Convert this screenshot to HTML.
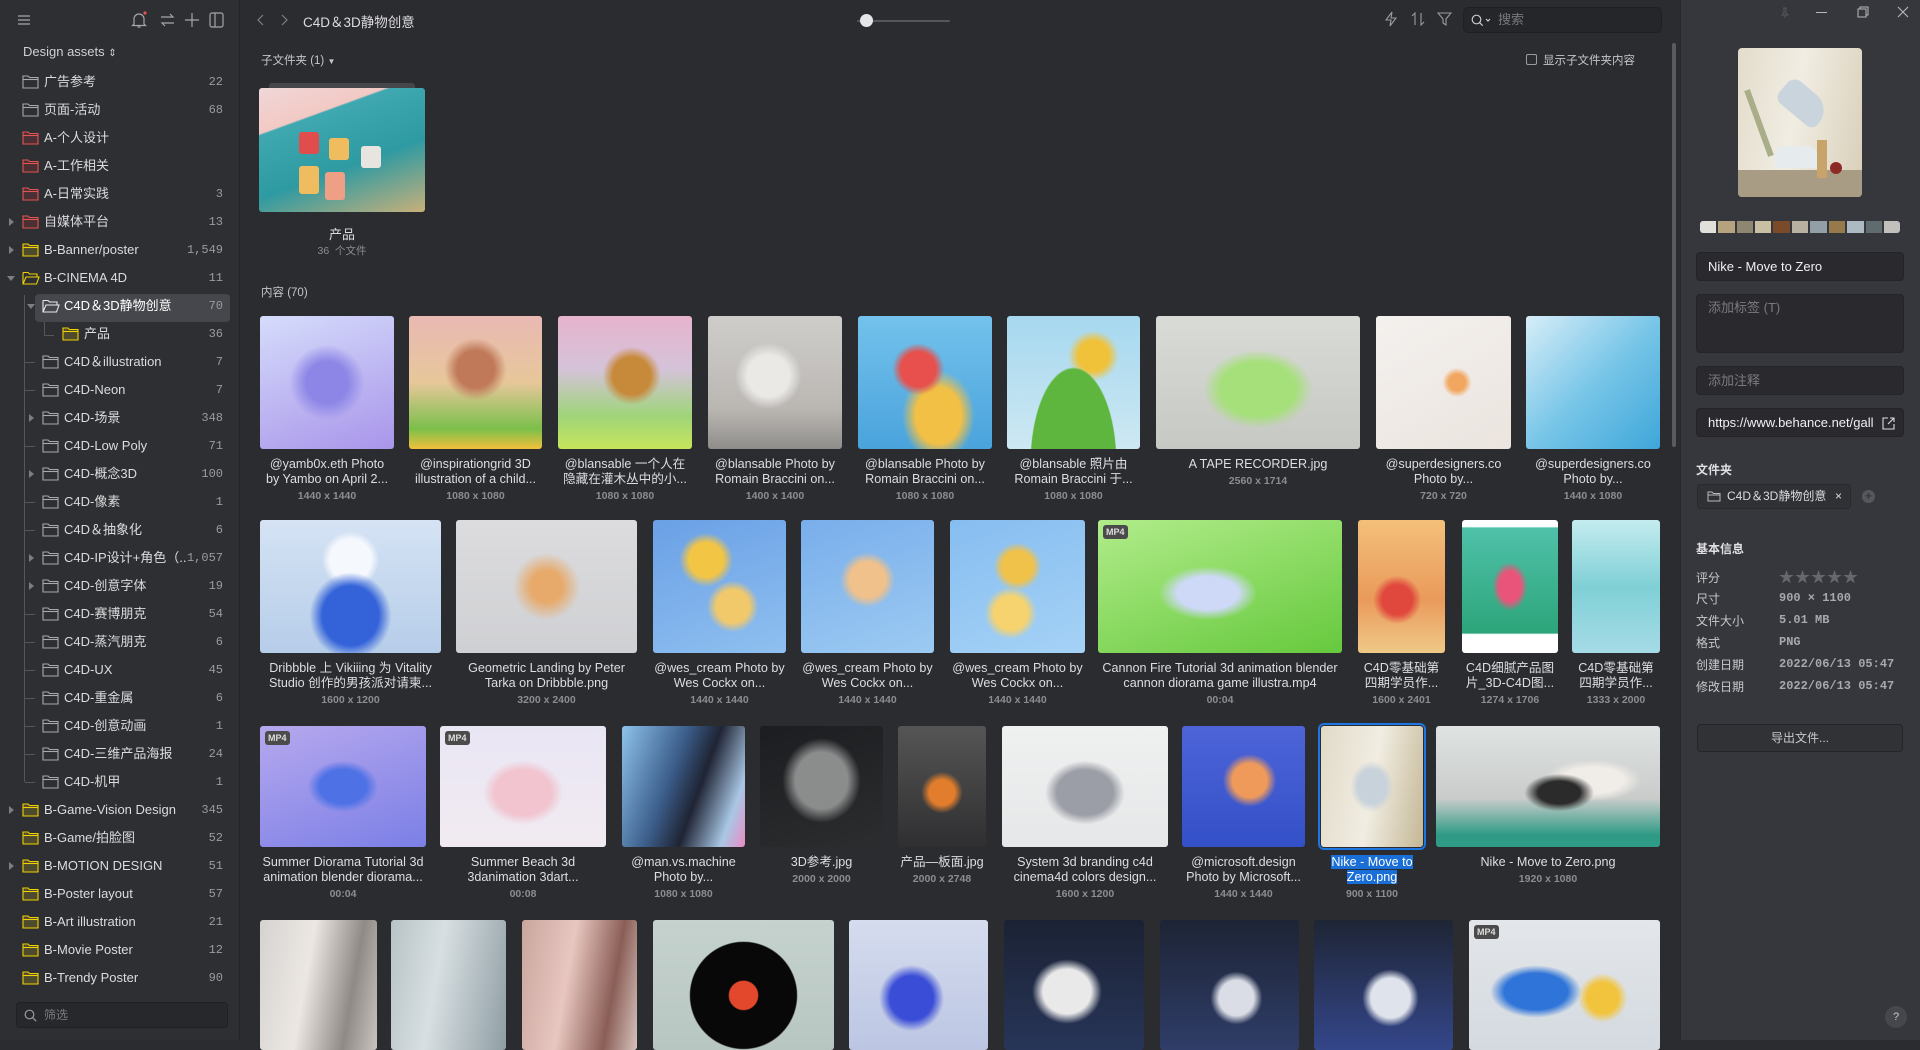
<!DOCTYPE html>
<html><head><meta charset="utf-8"><style>
*{box-sizing:border-box;margin:0;padding:0}
body{width:1920px;height:1040px;overflow:hidden;background:#2b2c30;font-family:"Liberation Sans","Noto Sans CJK SC",sans-serif;color:#d8d8da;position:relative}
.abs{position:absolute}
#side{left:0;top:0;width:240px;height:1040px;background:#2e2f33;border-right:1px solid #232427}
#right{left:1680px;top:0;width:240px;height:1040px;background:#36373c;border-left:1px solid #27282b}
.row{position:absolute;left:0;width:240px;height:28px;font-size:13px;line-height:28px;color:#dcdcde}
.row .n{position:absolute;right:17px;top:0;font-family:"Liberation Mono","DejaVu Sans Mono",monospace;font-size:12px;color:#9a9ba0}
.row svg{display:block}
.row .t{position:absolute;top:0;white-space:nowrap}
.row .ar{position:absolute;top:10px;width:0;height:0;border-top:4px solid transparent;border-bottom:4px solid transparent;border-left:5px solid #7d7e83}
.row .ad{position:absolute;top:12px;width:0;height:0;border-left:4px solid transparent;border-right:4px solid transparent;border-top:5px solid #7d7e83}
.it{position:absolute;text-align:center}
.th{border-radius:3px;position:relative;overflow:hidden}
.cap{font-size:12.6px;line-height:15px;color:#dedee0;margin-top:8px;white-space:nowrap;overflow:hidden;margin-left:-8px;margin-right:-8px}
.sz{font-size:10.5px;line-height:16px;color:#8c8d92;font-weight:bold;margin-top:1px}
.mp4{position:absolute;left:5px;top:5px;background:#4a4b4a;color:#ddd;font-size:9px;font-weight:bold;padding:2px 3px;border-radius:3px}
.inp{position:absolute;left:1696px;width:208px;background:#2a2a2e;border:1px solid #242428;border-radius:4px;font-size:13px;padding-left:11px}
.lab{position:absolute;left:1696px;font-size:12px;color:#c9c9cc}
.val{position:absolute;left:1779px;font-family:"Liberation Mono","DejaVu Sans Mono",monospace;font-size:12px;color:#a8a9ad;font-weight:bold}
</style></head><body>

<div id="side" class="abs">
 <svg class="abs" style="left:17px;top:14px" width="14" height="12" viewBox="0 0 14 12"><path d="M1 2h12M1 6h12M1 10h12" stroke="#a5a6aa" stroke-width="1.2"/></svg>
 <svg class="abs" style="left:131px;top:11px" width="16" height="18" viewBox="0 0 16 18"><path d="M3 13V8a5 5 0 0 1 10 0v5l1.5 1.5h-13zM6.5 16h3" stroke="#a5a6aa" stroke-width="1.2" fill="none"/><circle cx="14" cy="2" r="1.6" fill="#e0534f"/></svg>
 <svg class="abs" style="left:160px;top:13px" width="15" height="14" viewBox="0 0 15 14"><path d="M1 4h12l-3-3M14 10H2l3 3" stroke="#a5a6aa" stroke-width="1.2" fill="none"/></svg>
 <svg class="abs" style="left:185px;top:13px" width="14" height="14" viewBox="0 0 14 14"><path d="M7 0v14M0 7h14" stroke="#a5a6aa" stroke-width="1.2"/></svg>
 <svg class="abs" style="left:209px;top:12px" width="15" height="16" viewBox="0 0 15 16"><rect x="1" y="1" width="13" height="14" rx="2" stroke="#a5a6aa" stroke-width="1.2" fill="none"/><path d="M6 1v14" stroke="#a5a6aa" stroke-width="1.2"/></svg>
 <div class="abs" style="left:23px;top:44px;font-size:13px;color:#d0d0d3">Design assets <span style="font-size:10px">⇕</span></div>
 <div class="abs" style="left:35px;top:294px;width:195px;height:28px;background:#46474c;border-radius:4px"></div>
 <div class="abs" style="left:24px;top:295px;width:1px;height:487px;background:#55565a"></div>
 <div class="abs" style="left:44px;top:322px;width:1px;height:14px;background:#55565a"></div>
 <div class="abs" style="left:44px;top:335px;width:10px;height:1px;background:#55565a"></div>
 <div id="rows"></div>
 <div class="abs" style="left:16px;top:1002px;width:212px;height:26px;background:#27282b;border:1px solid #202124;border-radius:4px;font-size:12px;color:#7a7b80;line-height:24px;padding-left:27px">筛选
  <svg class="abs" style="left:7px;top:6px" width="13" height="13" viewBox="0 0 13 13"><circle cx="5.5" cy="5.5" r="4.3" stroke="#9a9ba0" stroke-width="1.2" fill="none"/><path d="M8.7 8.7l3.5 3.5" stroke="#9a9ba0" stroke-width="1.2"/></svg></div>
</div>

<svg class="abs" style="left:256px;top:14px" width="8" height="12" viewBox="0 0 8 12"><path d="M7 1L2 6l5 5" stroke="#7d7e83" stroke-width="1.2" fill="none"/></svg>
<svg class="abs" style="left:281px;top:14px" width="8" height="12" viewBox="0 0 8 12"><path d="M1 1l5 5-5 5" stroke="#7d7e83" stroke-width="1.2" fill="none"/></svg>
<div class="abs" style="left:303px;top:11px;font-size:13.5px;color:#dcdcde">C4D＆3D静物创意</div>
<div class="abs" style="left:857px;top:20px;width:93px;height:2px;background:#55565b;border-radius:1px"></div>
<div class="abs" style="left:860px;top:14px;width:13px;height:13px;border-radius:50%;background:#e6e6e8"></div>
<svg class="abs" style="left:1384px;top:11px" width="14" height="16" viewBox="0 0 14 16"><path d="M8 1L2 9h5l-1 6 6-8H7z" stroke="#9a9ba0" stroke-width="1.1" fill="none"/></svg>
<svg class="abs" style="left:1411px;top:12px" width="15" height="14" viewBox="0 0 15 14"><path d="M4 13V1L1 4M10 1v12l3-3" stroke="#9a9ba0" stroke-width="1.1" fill="none"/></svg>
<svg class="abs" style="left:1437px;top:12px" width="15" height="14" viewBox="0 0 15 14"><path d="M1 1h13L9 7v6L6 11V7z" stroke="#9a9ba0" stroke-width="1.1" fill="none"/></svg>
<div class="abs" style="left:1463px;top:7px;width:199px;height:26px;background:#252629;border:1px solid #1f2023;border-radius:5px;font-size:13px;color:#77787d;line-height:24px;padding-left:34px">搜索
 <svg class="abs" style="left:7px;top:6px" width="24" height="13" viewBox="0 0 24 13"><circle cx="5.5" cy="5.5" r="4.3" stroke="#c9c9cc" stroke-width="1.2" fill="none"/><path d="M8.7 8.7l3 3M15 5l2 2 2-2" stroke="#c9c9cc" stroke-width="1.2" fill="none"/></svg></div>
<div class="abs" style="left:1526px;top:54px;width:11px;height:11px;border:1px solid #9a9ba0;border-radius:2px"></div>
<div class="abs" style="left:1543px;top:52px;font-size:11.5px;color:#c6c6c9">显示子文件夹内容</div>
<div class="abs" style="left:1672px;top:43px;width:4px;height:404px;background:#5a5b60;border-radius:2px"></div>

<div class="abs" style="left:261px;top:52px;font-size:11.5px;color:#c6c6c9">子文件夹 (1) <span style="font-size:8px">▼</span></div>
<div class="abs" style="left:269px;top:83px;width:146px;height:8px;background:#45464a;border-radius:3px"></div>
<div class="abs" style="left:259px;top:88px;width:166px;height:124px;border-radius:3px;background:linear-gradient(160deg,#f0d7d8 0%,#f2c9c4 25%,#3fa8b0 26%,#2e9aa2 60%,#c8b07a 100%);overflow:hidden">
 <div class="abs" style="left:40px;top:44px;width:20px;height:22px;background:#e14c4c;border-radius:3px"></div>
 <div class="abs" style="left:70px;top:50px;width:20px;height:22px;background:#efbd5f;border-radius:3px"></div>
 <div class="abs" style="left:102px;top:58px;width:20px;height:22px;background:#e8e4e0;border-radius:3px"></div>
 <div class="abs" style="left:40px;top:78px;width:20px;height:28px;background:#efbd5f;border-radius:3px"></div>
 <div class="abs" style="left:66px;top:84px;width:20px;height:28px;background:#ee9f86;border-radius:3px"></div>
</div>
<div class="abs" style="left:259px;top:224px;width:166px;text-align:center;font-size:13px;color:#dcdcde">产品</div>
<div class="abs" style="left:259px;top:243px;width:166px;text-align:center;font-size:10.5px;color:#8c8d92">36 &nbsp;个文件</div>
<div class="abs" style="left:261px;top:284px;font-size:11.5px;color:#c6c6c9">内容 (70)</div>

<div id="grid"></div>

<div id="right" class="abs"></div>
<svg class="abs" style="left:1781px;top:7px" width="8" height="12" viewBox="0 0 8 12"><path d="M2 1h4M3 1v5l-2 2h6L5 6V1M4 8v3" stroke="#55565b" stroke-width="1" fill="none"/></svg>
<div class="abs" style="left:1816px;top:12px;width:11px;height:1px;background:#b8b9bc"></div>
<svg class="abs" style="left:1857px;top:6px" width="12" height="12" viewBox="0 0 12 12"><rect x="1" y="3" width="8" height="8" stroke="#b8b9bc" fill="none"/><path d="M3 3V1h8v8H9" stroke="#b8b9bc" fill="none"/></svg>
<svg class="abs" style="left:1897px;top:6px" width="12" height="12" viewBox="0 0 12 12"><path d="M1 1l10 10M11 1L1 11" stroke="#b8b9bc" stroke-width="1.1"/></svg>
<div class="abs" style="left:1738px;top:48px;width:124px;height:149px;border-radius:4px;overflow:hidden;background:linear-gradient(100deg,#e3dccb 0%,#f1ede3 45%,#d8cfb9 100%)">
 <div class="abs" style="left:0;top:122px;width:124px;height:27px;background:#a89c84"></div>
 <div class="abs" style="left:40px;top:40px;width:50px;height:30px;background:#c9d4dc;border-radius:10px 20px 8px 8px;transform:rotate(40deg)"></div>
 <div class="abs" style="left:36px;top:98px;width:46px;height:22px;background:#e6ebee;border-radius:10px 14px 6px 6px"></div>
 <div class="abs" style="left:79px;top:92px;width:10px;height:38px;background:#c9a46a"></div>
 <div class="abs" style="left:92px;top:114px;width:12px;height:12px;border-radius:50%;background:#8c2a25"></div>
 <div class="abs" style="left:18px;top:40px;width:6px;height:70px;background:#a9ae88;transform:rotate(-20deg)"></div>
</div>
<div class="abs" style="left:1700px;top:221px;height:12px;display:flex;gap:2px">
 <div style="width:16px;background:#e0dfda;border-radius:3px 0 0 3px"></div><div style="width:17px;background:#b5a37f"></div><div style="width:16px;background:#8f8671"></div><div style="width:16px;background:#c9c0a4"></div><div style="width:17px;background:#7a4b2a"></div><div style="width:16px;background:#b8b0a0"></div><div style="width:17px;background:#939fa6"></div><div style="width:16px;background:#977a4b"></div><div style="width:17px;background:#acbac2"></div><div style="width:16px;background:#5f6b6c"></div><div style="width:16px;background:#c1c0bd;border-radius:0 3px 3px 0"></div>
</div>
<div class="inp" style="top:252px;height:29px;line-height:27px;color:#f0f0f2">Nike - Move to Zero</div>
<div class="inp" style="top:294px;height:59px;line-height:26px;color:#7a7b80">添加标签 (T)</div>
<div class="inp" style="top:366px;height:29px;line-height:27px;color:#7a7b80">添加注释</div>
<div class="inp" style="top:408px;height:29px;line-height:27px;color:#f0f0f2">https://www.behance.net/gall
 <svg class="abs" style="left:185px;top:8px" width="13" height="13" viewBox="0 0 13 13"><path d="M6 1H1v11h11V7M8 1h4v4M12 1L6 7" stroke="#ddd" stroke-width="1.1" fill="none"/></svg></div>
<div class="abs" style="left:1696px;top:461px;font-size:12px;font-weight:bold;color:#e0e0e2">文件夹</div>
<div class="abs" style="left:1697px;top:484px;width:154px;height:25px;border:1px solid #28292c;background:#303135;border-radius:4px;font-size:12px;line-height:23px;color:#dcdcde;padding-left:29px">C4D＆3D静物创意 <span style="position:absolute;left:137px;color:#ddd">×</span>
 <svg class="abs" style="left:9px;top:6px" width="14" height="11" viewBox="0 0 14 11"><path d="M1 1h4l1.5 1.5H13V10H1zM1 4h12" stroke="#b8b9bc" stroke-width="1" fill="none"/></svg></div>
<div class="abs" style="left:1862px;top:490px;width:13px;height:13px;border-radius:50%;background:#56575c;color:#36373c;font-size:12px;line-height:13px;text-align:center;font-weight:bold">+</div>
<div class="abs" style="left:1696px;top:540px;font-size:12px;font-weight:bold;color:#e0e0e2">基本信息</div>
<div class="lab" style="top:569px">评分</div><div class="abs" style="left:1779px;top:566px;font-size:15px;color:#67686d;letter-spacing:1px">★★★★★</div>
<div class="lab" style="top:590px">尺寸</div><div class="val" style="top:591px">900 × 1100</div>
<div class="lab" style="top:612px">文件大小</div><div class="val" style="top:613px">5.01 MB</div>
<div class="lab" style="top:634px">格式</div><div class="val" style="top:635px">PNG</div>
<div class="lab" style="top:656px">创建日期</div><div class="val" style="top:657px">2022/06/13 05:47</div>
<div class="lab" style="top:678px">修改日期</div><div class="val" style="top:679px">2022/06/13 05:47</div>
<div class="abs" style="left:1697px;top:724px;width:206px;height:28px;border:1px solid #242528;background:#313236;border-radius:4px;font-size:12px;line-height:26px;text-align:center;color:#c9c9cc">导出文件...</div>
<div class="abs" style="left:1885px;top:1006px;width:22px;height:22px;border-radius:50%;background:#46474c;font-size:11px;line-height:22px;text-align:center;color:#ccc">?</div>

<script>
function folder(c,open){
 if(open) return '<svg width="18" height="14" viewBox="0 0 18 14"><path d="M1 1.5h5l1.5 1.5H15V6M1 1.5V13h13.5L17 6H4L1 13" stroke="'+c+'" stroke-width="1.1" fill="none"/></svg>';
 var f=c=="#f1d100"?'fill="#4d4a2e"':(c=="#e25555"?'fill="#4a3033"':'fill="none"');
 return '<svg width="17" height="14" viewBox="0 0 17 14"><path d="M1 1h5l1.5 1.5H16V13H1z" stroke="'+c+'" stroke-width="1.1" '+f+'/><path d="M1 4.5h15" stroke="'+c+'" stroke-width="1.1"/></svg>';
}
var G="#a9aaae",R="#e25555",Y="#f1d100",W="#e8e8ea";
var rows=[
[0,"广告参考","22",G],[0,"页面-活动","68",G],[0,"A-个人设计","",R],[0,"A-工作相关","",R],[0,"A-日常实践","3",R],
[0,"自媒体平台","13",R,"r"],[0,"B-Banner/poster","1,549",Y,"r"],[0,"B-CINEMA 4D","11",Y,"d",1],
[1,"C4D＆3D静物创意","70",W,"d",1],[2,"产品","36",Y],
[1,"C4D＆illustration","7",G],[1,"C4D-Neon","7",G],[1,"C4D-场景","348",G,"r"],[1,"C4D-Low Poly","71",G],
[1,"C4D-概念3D","100",G,"r"],[1,"C4D-像素","1",G],[1,"C4D＆抽象化","6",G],[1,"C4D-IP设计+角色（..","1,057",G,"r"],
[1,"C4D-创意字体","19",G,"r"],[1,"C4D-赛博朋克","54",G],[1,"C4D-蒸汽朋克","6",G],[1,"C4D-UX","45",G],
[1,"C4D-重金属","6",G],[1,"C4D-创意动画","1",G],[1,"C4D-三维产品海报","24",G],[1,"C4D-机甲","1",G],
[0,"B-Game-Vision Design","345",Y,"r"],[0,"B-Game/拍脸图","52",Y],[0,"B-MOTION DESIGN","51",Y,"r"],
[0,"B-Poster layout","57",Y],[0,"B-Art illustration","21",Y],[0,"B-Movie Poster","12",Y],[0,"B-Trendy Poster","90",Y]];
var h="";
rows.forEach(function(r,i){
 var top=68+i*28, ix=22+r[0]*20, tx=44+r[0]*20;
 var s='<div class="row" style="top:'+top+'px">';
 if(r[0]==1&&!r[4]) s+='<div class="abs" style="left:25px;top:14px;width:10px;height:1px;background:#55565a"></div>';
 if(r[4]=="r") s+='<div class="ar" style="left:'+(ix-13)+'px"></div>';
 if(r[4]=="d") s+='<div class="ad" style="left:'+(ix-15)+'px"></div>';
 s+='<div style="position:absolute;left:'+ix+'px;top:7px">'+folder(r[3],r[5])+'</div>';
 s+='<div class="t" style="left:'+tx+'px;'+(r[3]==W?'color:#fff':'')+'">'+r[1]+'</div><div class="n">'+r[2]+'</div></div>';
 h+=s;
});
document.getElementById("rows").innerHTML=h;

function row(top,hh,items){
 var s="";
 items.forEach(function(it){
  var l=it[0],w=it[1]-it[0];
  var sel=it[6];
  s+='<div class="it" style="left:'+l+'px;top:'+top+'px;width:'+w+'px">';
  s+='<div class="th" style="height:'+hh+'px;background:'+it[2]+';'+(sel?'outline:2px solid #1d76e2;outline-offset:1px;':'')+'">'+(it[5]?'<div class="mp4">MP4</div>':'')+'</div>';
  if(it[3]!==null){
   s+='<div class="cap">'+(sel?'<span style="background:#1a6ed8;color:#fff">'+it[3].replace("<br>",'</span><br><span style="background:#1a6ed8;color:#fff">')+'</span>':it[3])+'</div><div class="sz">'+it[4]+'</div>';
  }
  s+='</div>';
 });
 return s;
}
var g="";
g+=row(316,133,[
[260,394,"radial-gradient(circle at 50% 50%,#8d86e6 0 22%,transparent 40%),linear-gradient(160deg,#d5dcfb,#a995ea)","@yamb0x.eth Photo<br>by Yambo on April 2...","1440 x 1440"],
[409,542,"radial-gradient(circle at 50% 40%,#c07a5a 0 18%,transparent 30%),linear-gradient(180deg,#e9b9b3 0%,#e7c79a 50%,#7bbf4a 85%,#f2c13a 100%)","@inspirationgrid 3D<br>illustration of a child...","1080 x 1080"],
[558,692,"radial-gradient(ellipse at 55% 45%,#c78a3a 0 18%,transparent 28%),linear-gradient(180deg,#e6b3cd 0%,#d5c3d9 40%,#9fd47a 75%,#c7e55a 100%)","@blansable 一个人在<br>隐藏在灌木丛中的小...","1080 x 1080"],
[708,842,"radial-gradient(ellipse at 45% 45%,#ebe9e6 0 20%,transparent 32%),linear-gradient(180deg,#cfcdca,#bab7b3 70%,#8f8d8a)","@blansable Photo by<br>Romain Braccini on...","1400 x 1400"],
[858,992,"radial-gradient(circle at 45% 40%,#e7504c 0 16%,transparent 24%),radial-gradient(ellipse at 60% 75%,#f2c045 0 20%,transparent 32%),linear-gradient(180deg,#73c2ec,#4aa3dc)","@blansable Photo by<br>Romain Braccini on...","1080 x 1080"],
[1007,1140,"radial-gradient(ellipse at 50% 110%,#5fb63e 0 45%,transparent 46%),radial-gradient(circle at 65% 30%,#f0c23a 0 12%,transparent 20%),linear-gradient(180deg,#a6d8ef,#cde8f3)","@blansable 照片由<br>Romain Braccini 于...","1080 x 1080"],
[1156,1360,"radial-gradient(ellipse at 50% 55%,#a6e07a 0 26%,transparent 38%),linear-gradient(180deg,#d9dbd7,#c6c8c3)","A TAPE RECORDER.jpg","2560 x 1714"],
[1376,1511,"radial-gradient(circle at 60% 50%,#f2a760 0 8%,transparent 14%),linear-gradient(150deg,#f4f1ee,#ebe4df)","@superdesigners.co<br>Photo by...","720 x 720"],
[1526,1660,"linear-gradient(135deg,#d7eef8 0%,#79c6e8 50%,#3ea6d9 100%)","@superdesigners.co<br>Photo by...","1440 x 1080"]]);
g+=row(520,133,[
[260,441,"radial-gradient(ellipse at 50% 72%,#3463d9 0 22%,transparent 32%),radial-gradient(circle at 50% 30%,#f5f8fd 0 16%,transparent 22%),linear-gradient(180deg,#d5e3f4,#b6cde9)","Dribbble 上 Vikiiing 为 Vitality<br>Studio 创作的男孩派对请柬...","1600 x 1200"],
[456,637,"radial-gradient(circle at 50% 50%,#e7aa6b 0 14%,transparent 30%),linear-gradient(180deg,#dcdcde,#cfd0d3)","Geometric Landing by Peter<br>Tarka on Dribbble.png","3200 x 2400"],
[653,786,"radial-gradient(circle at 40% 30%,#f3c545 0 14%,transparent 22%),radial-gradient(circle at 60% 65%,#f2c96a 0 14%,transparent 22%),linear-gradient(160deg,#6aa0e6,#8fc0f0)","@wes_cream Photo by<br>Wes Cockx on...","1440 x 1440"],
[801,934,"radial-gradient(circle at 50% 45%,#f0c18a 0 18%,transparent 28%),linear-gradient(160deg,#78aeeb,#9ccaf2)","@wes_cream Photo by<br>Wes Cockx on...","1440 x 1440"],
[950,1085,"radial-gradient(circle at 50% 35%,#f1c24a 0 14%,transparent 22%),radial-gradient(circle at 45% 70%,#f6d36e 0 14%,transparent 22%),linear-gradient(160deg,#86bdf0,#a5d2f6)","@wes_cream Photo by<br>Wes Cockx on...","1440 x 1440"],
[1098,1342,"radial-gradient(ellipse at 45% 55%,#cdd9f6 0 16%,transparent 26%),linear-gradient(160deg,#b1ec8a,#66c93d)","Cannon Fire Tutorial 3d animation blender<br>cannon diorama game illustra.mp4","00:04",1],
[1358,1445,"radial-gradient(circle at 45% 60%,#e0473d 0 16%,transparent 26%),linear-gradient(180deg,#f3c07a,#ea9a5b 60%,#efc987)","C4D零基础第<br>四期学员作...","1600 x 2401"],
[1462,1558,"radial-gradient(ellipse at 50% 50%,#e9557a 0 16%,transparent 26%),linear-gradient(180deg,#fff 0 5%,#4fc1a9 6%,#2da57a 85%,#fff 86%)","C4D细腻产品图<br>片_3D-C4D图...","1274 x 1706"],
[1572,1660,"linear-gradient(180deg,#c4ecef,#7fd0d6 50%,#a6dbe6)","C4D零基础第<br>四期学员作...","1333 x 2000"]]);
g+=row(726,121,[
[260,426,"radial-gradient(ellipse at 50% 50%,#4e72e6 0 20%,transparent 30%),linear-gradient(160deg,#b6a8ee,#7b7fe6)","Summer Diorama Tutorial 3d<br>animation blender diorama...","00:04",1],
[440,606,"radial-gradient(ellipse at 50% 55%,#f1c4cf 0 24%,transparent 34%),linear-gradient(180deg,#e9e6f4,#f1eaf1)","Summer Beach 3d<br>3danimation 3dart...","00:08",1],
[622,745,"linear-gradient(110deg,#8ec3ec 0%,#3b5d8a 40%,#1f2434 60%,#a9c7e5 85%,#e98dc3 100%)","@man.vs.machine<br>Photo by...","1080 x 1080"],
[760,883,"radial-gradient(ellipse at 50% 45%,#8b8c8c 0 30%,transparent 45%),linear-gradient(160deg,#1c1d20,#2c2d2f)","3D参考.jpg","2000 x 2000"],
[898,986,"radial-gradient(circle at 50% 55%,#e17d2c 0 16%,transparent 26%),linear-gradient(180deg,#555 ,#2f2f31)","产品—板面.jpg","2000 x 2748"],
[1002,1168,"radial-gradient(ellipse at 50% 55%,#9b9ea6 0 24%,transparent 34%),linear-gradient(180deg,#eff0f0,#e6e7e8)","System 3d branding c4d<br>cinema4d colors design...","1600 x 1200"],
[1182,1305,"radial-gradient(ellipse at 55% 45%,#ef9a5b 0 18%,transparent 28%),linear-gradient(180deg,#4d64d8,#3450c8)","@microsoft.design<br>Photo by Microsoft...","1440 x 1440"],
[1321,1423,"radial-gradient(ellipse at 50% 50%,#c8d2da 0 20%,transparent 30%),linear-gradient(100deg,#e1dac8,#f1ede2 50%,#c4b796)","Nike - Move to<br>Zero.png","900 x 1100",0,1],
[1436,1660,"radial-gradient(ellipse at 55% 55%,#2b2b2b 0 12%,transparent 20%),radial-gradient(ellipse at 70% 45%,#f0ece8 0 14%,transparent 22%),linear-gradient(180deg,#dfe3e2,#c9ccca 60%,#2f9b86 90%)","Nike - Move to Zero.png","1920 x 1080"]]);
g+=row(920,130,[
[260,377,"linear-gradient(100deg,#d5d3d0,#ece7e3 40%,#8f8a86 75%,#c9c4c0)",null],
[391,506,"linear-gradient(100deg,#b7c3c6,#d8dfe2 40%,#8f9ea4 100%)",null],
[522,637,"linear-gradient(100deg,#c9a59d,#e8c7c0 40%,#8a5e57 75%,#d7c2bc)",null],
[653,834,"radial-gradient(circle at 50% 58%,#e4482c 0 12%,#080808 13% 45%,transparent 46%),linear-gradient(180deg,#c5d2cd,#b8c6c1)",null],
[849,988,"radial-gradient(ellipse at 45% 60%,#3a4dd6 0 20%,transparent 30%),linear-gradient(180deg,#d5dcee,#bcc6e3)",null],
[1004,1144,"radial-gradient(ellipse at 45% 55%,#e9e9ea 0 22%,transparent 32%),linear-gradient(180deg,#1b2234,#273558)",null],
[1160,1299,"radial-gradient(ellipse at 55% 60%,#dadde6 0 16%,transparent 24%),linear-gradient(180deg,#1d2435,#2f3d68)",null],
[1314,1453,"radial-gradient(ellipse at 55% 60%,#dfe3ec 0 18%,transparent 26%),linear-gradient(180deg,#1e2535,#34468a)",null],
[1469,1660,"radial-gradient(ellipse at 35% 55%,#2f74d8 0 18%,transparent 26%),radial-gradient(circle at 70% 60%,#f2c43d 0 10%,transparent 16%),linear-gradient(180deg,#e3e6ea,#d4dae0)",null,"",1]]);
document.getElementById("grid").innerHTML=g;
</script>
</body></html>
